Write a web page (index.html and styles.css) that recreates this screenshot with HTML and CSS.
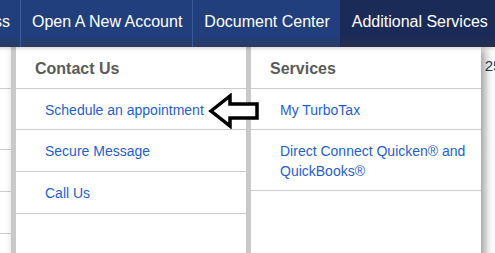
FILE: index.html
```html
<!DOCTYPE html>
<html lang="en">

<head>
    <meta charset="UTF-8">
    <meta name="viewport" content="width=device-width, initial-scale=1.0">
    <title>Additional Services</title>
    <link rel="stylesheet" href="styles.css">
</head>

<body>

    <!-- Top navigation -->
    <nav class="topnav">
        <a class="nav-item nav-first" href="#">ss</a>
        <a class="nav-item" href="#">Open A New Account</a>
        <a class="nav-item" href="#">Document Center</a>
        <a class="nav-item nav-active" href="#">Additional Services</a>
    </nav>

    <div class="page">
        <!-- Page content peeking out at the left -->
        <div class="page-edge">
            <div class="edge-row"></div>
            <div class="edge-row edge-tall"></div>
            <div class="edge-row"></div>
            <div class="edge-row"></div>
        </div>

        <!-- Dropdown menu for Additional Services -->
        <div class="dropdown">
            <div class="menu-col">
                <h3 class="menu-title">Contact Us</h3>
                <ul class="menu-list contact-list">
                    <li class="pointed">
                        <a href="#">Schedule an appointment</a>
                        <svg class="pointer" width="54" height="36" viewBox="0 0 54 36">
                            <polygon points="3,18 22,3 22,11 49,11 49,25 22,25 22,33" fill="#fff" stroke="#000"
                                stroke-width="3.5" />
                        </svg>
                    </li>
                    <li><a href="#">Secure Message</a></li>
                    <li><a href="#">Call Us</a></li>
                </ul>
            </div>
            <div class="menu-col">
                <h3 class="menu-title">Services</h3>
                <ul class="menu-list">
                    <li><a href="#">My TurboTax</a></li>
                    <li><a href="#">Direct Connect Quicken&reg; and QuickBooks&reg;</a></li>
                </ul>
            </div>
        </div>

        <!-- Page content peeking out at the right -->
        <div class="page-rest">y 25</div>
    </div>

</body>

</html>
```

FILE: styles.css
```css
body {
    font-family: "Liberation Sans", Arial, sans-serif;
    background-color: #fff;
    margin: 0;
    padding: 0;
    overflow: hidden;
}

/* Top navigation bar */
.topnav {
    display: flex;
    height: 47px;
    margin-left: -6px;
    background: linear-gradient(#213f7c 0%, #213f7c 78%, #2b3a60 100%);
    box-shadow: 0 2px 3px rgba(0, 0, 0, 0.15);
    position: relative;
    z-index: 2;
}

.nav-item {
    color: #fff;
    text-decoration: none;
    font-size: 16px;
    line-height: 44px;
    padding: 0 10px 0 11px;
    border-left: 1px solid #3a5a9c;
    white-space: nowrap;
}

.nav-first {
    border-left: none;
    padding: 0 10px 0 0;
}

.nav-active {
    flex: 1;
    background: linear-gradient(#1b2b58 0%, #1b2b58 78%, #262f4c 100%);
    border-left-color: #1b2b58;
}

/* Area under the navigation */
.page {
    display: flex;
    align-items: flex-start;
}

.page-edge {
    width: 11px;
    flex-shrink: 0;
}

.edge-row {
    height: 41px;
    border-bottom: 1px solid #ccc;
}

.edge-tall {
    height: 60px;
}

.page-rest {
    flex: 1;
    overflow: hidden;
    white-space: nowrap;
    font-size: 15px;
    color: #2a3a5a;
    padding-top: 10px;
    text-indent: -8px;
}

/* Dropdown */
.dropdown {
    display: flex;
    gap: 5px;
    padding-left: 5px;
    min-height: 220px;
    background-color: #c9c9c9;
    box-shadow: 4px 2px 9px rgba(0, 0, 0, 0.4);
    position: relative;
    z-index: 1;
}

.menu-col {
    width: 230px;
    background-color: #fff;
}

.menu-title {
    margin: 0;
    height: 41px;
    line-height: 43px;
    padding-left: 19px;
    font-size: 16px;
    font-weight: bold;
    color: #5b5b5b;
    border-bottom: 1px solid #ccc;
}

.menu-list {
    list-style: none;
    margin: 0;
    padding: 0;
}

.menu-list li {
    padding: 11px 12px 9px 29px;
    line-height: 20px;
    font-size: 14px;
    border-bottom: 1px solid #ccc;
}

.contact-list li {
    line-height: 21px;
}

.contact-list li.pointed {
    line-height: 20px;
    position: relative;
}

.menu-list a {
    color: #1f5ed6;
    text-decoration: none;
}

/* Hand-drawn arrow pointing at the appointment link */
.pointer {
    position: absolute;
    left: 192px;
    top: 4px;
}
```
